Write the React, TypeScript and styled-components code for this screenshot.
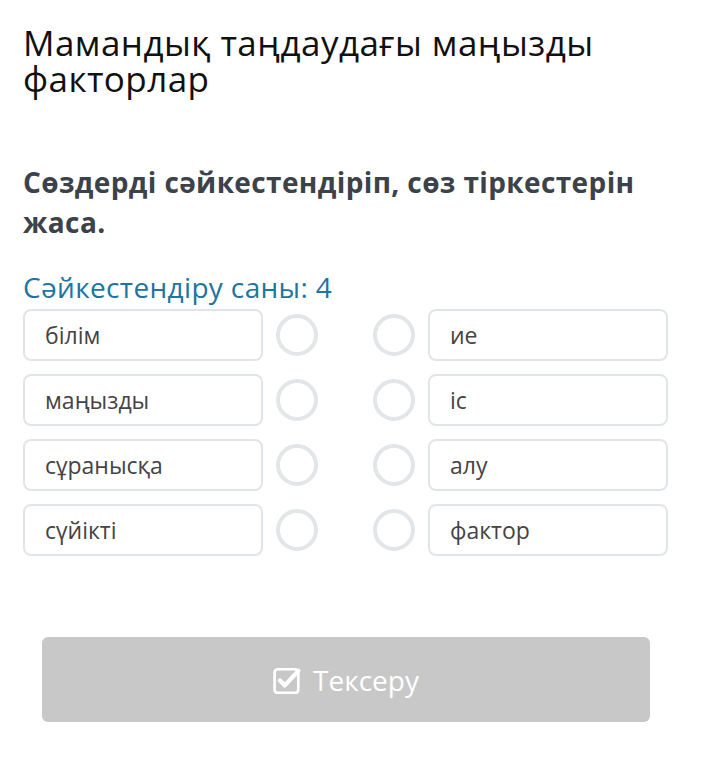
import React from "react";
import styled, { createGlobalStyle } from "styled-components";

const Global = createGlobalStyle`
  html, body { margin: 0; padding: 0; background: #fff; }
  body { font-family: "Open Sans", "Noto Sans", sans-serif; }
`;

const Page = styled.div`
  width: 706px;
  padding: 25px 23px 0 23px;
  box-sizing: border-box;
`;

const Title = styled.h1`
  margin: 0;
  font-weight: 400;
  font-size: 35px;
  line-height: 36px;
  letter-spacing: 0.45px;
  color: #111;
`;

const Instruction = styled.h2`
  margin: 65px 0 0 0;
  font-weight: 700;
  font-size: 28px;
  line-height: 40px;
  letter-spacing: 0.38px;
  color: #3b4249;
`;

const Count = styled.div`
  margin-top: 28px;
  font-size: 28px;
  line-height: 34px;
  letter-spacing: 0.35px;
  color: #1e74a2;
`;

const Grid = styled.div`
  margin-top: 5px;
  display: flex;
  flex-direction: column;
  gap: 13px;
`;

const Row = styled.div`
  display: flex;
  align-items: center;
`;

const Box = styled.div<{ $ml?: number }>`
  width: 240px;
  height: 52px;
  box-sizing: border-box;
  border: 2px solid #e2e5e7;
  border-radius: 8px;
  display: flex;
  align-items: center;
  padding-left: 20px;
  margin-left: ${(p) => p.$ml ?? 0}px;
  font-size: 23px;
  color: #444;
`;

const Dot = styled.div<{ $ml: number }>`
  width: 42px;
  height: 42px;
  box-sizing: border-box;
  border: 4px solid #e2e6e9;
  border-radius: 50%;
  margin-left: ${(p) => p.$ml}px;
`;

const ButtonWrap = styled.div`
  padding: 81px 33px 0 19px;
`;

const Button = styled.div`
  height: 85px;
  border-radius: 6px;
  background: #c8c8c8;
  color: #fff;
  display: flex;
  align-items: center;
  justify-content: center;
  gap: 12px;
  font-size: 28px;
`;

const left = ["білім", "маңызды", "сұранысқа", "сүйікті"];
const right = ["ие", "іс", "алу", "фактор"];

export default function App() {
  return (
    <Page>
      <Global />
      <Title>Мамандық таңдаудағы маңызды факторлар</Title>
      <Instruction>Сөздерді сәйкестендіріп, сөз тіркестерін жаса.</Instruction>
      <Count>Сәйкестендіру саны: 4</Count>
      <Grid>
        {left.map((l, i) => (
          <Row key={i}>
            <Box>{l}</Box>
            <Dot $ml={13} />
            <Dot $ml={55} />
            <Box $ml={13}>{right[i]}</Box>
          </Row>
        ))}
      </Grid>
      <ButtonWrap>
        <Button>
          <svg width="28" height="28" viewBox="0 0 26 26" fill="none">
            <rect x="1.5" y="3" width="22" height="22" rx="3" stroke="#fff" strokeWidth="2.5" />
            <path d="M6.5 13.5 L11 18 L23.5 4.5" stroke="#fff" strokeWidth="4" strokeLinecap="round" strokeLinejoin="round" />
          </svg>
          <span>Тексеру</span>
        </Button>
      </ButtonWrap>
    </Page>
  );
}
